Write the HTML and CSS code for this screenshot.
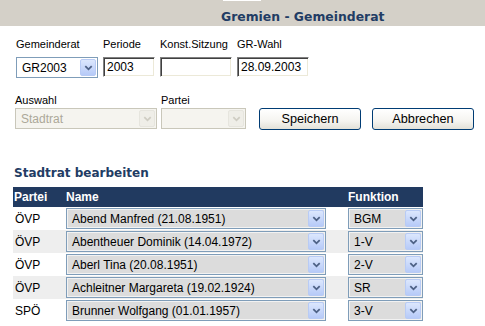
FILE: index.html
```html
<!DOCTYPE html>
<html>
<head>
<meta charset="utf-8">
<title>Gremien - Gemeinderat</title>
<link rel="stylesheet" href="styles.css">
</head>
<body>
<div class="topbar">
  <div class="notch"></div>
  <div class="title">Gremien - Gemeinderat</div>
</div>

<div class="row1">
  <label class="lbl">Gemeinderat</label>
  <label class="lbl">Periode</label>
  <label class="lbl">Konst.Sitzung</label>
  <label class="lbl">GR-Wahl</label>
  <div class="sel sel-white"><span class="sel-text">GR2003</span><span class="dd"><svg viewBox="0 0 9 6" width="9" height="6"><path d="M1.3 1.2 L4.5 4.3 L7.7 1.2" fill="none" stroke="#4d6185" stroke-width="1.8"/></svg></span></div>
  <div class="inp">2003</div>
  <div class="inp"></div>
  <div class="inp">28.09.2003</div>
</div>

<div class="row2">
  <label class="lbl">Auswahl</label>
  <label class="lbl">Partei</label>
  <span></span>
  <span></span>
  <div class="sel sel-disabled"><span class="sel-text">Stadtrat</span><span class="dd dd-dis"><svg viewBox="0 0 9 6" width="9" height="6"><path d="M1.3 1.2 L4.5 4.3 L7.7 1.2" fill="none" stroke="#cfcdc3" stroke-width="1.8"/></svg></span></div>
  <div class="sel sel-disabled"><span class="sel-text"></span><span class="dd dd-dis"><svg viewBox="0 0 9 6" width="9" height="6"><path d="M1.3 1.2 L4.5 4.3 L7.7 1.2" fill="none" stroke="#cfcdc3" stroke-width="1.8"/></svg></span></div>
  <button class="btn">Speichern</button>
  <button class="btn">Abbrechen</button>
</div>

<h2 class="section">Stadtrat bearbeiten</h2>

<table class="grid">
  <colgroup><col class="c-partei"><col class="c-name"><col class="c-funk"></colgroup>
  <thead>
    <tr><th>Partei</th><th>Name</th><th>Funktion</th></tr>
  </thead>
  <tbody>
    <tr>
      <td>ÖVP</td>
      <td><div class="sel sel-gray sel-name"><span class="sel-text">Abend Manfred (21.08.1951)</span><span class="dd"><svg viewBox="0 0 9 6" width="9" height="6"><path d="M1.3 1.2 L4.5 4.3 L7.7 1.2" fill="none" stroke="#4d6185" stroke-width="1.8"/></svg></span></div></td>
      <td><div class="sel sel-gray sel-funk"><span class="sel-text">BGM</span><span class="dd"><svg viewBox="0 0 9 6" width="9" height="6"><path d="M1.3 1.2 L4.5 4.3 L7.7 1.2" fill="none" stroke="#4d6185" stroke-width="1.8"/></svg></span></div></td>
    </tr>
    <tr class="alt">
      <td>ÖVP</td>
      <td><div class="sel sel-gray sel-name"><span class="sel-text">Abentheuer Dominik (14.04.1972)</span><span class="dd"><svg viewBox="0 0 9 6" width="9" height="6"><path d="M1.3 1.2 L4.5 4.3 L7.7 1.2" fill="none" stroke="#4d6185" stroke-width="1.8"/></svg></span></div></td>
      <td><div class="sel sel-gray sel-funk"><span class="sel-text">1-V</span><span class="dd"><svg viewBox="0 0 9 6" width="9" height="6"><path d="M1.3 1.2 L4.5 4.3 L7.7 1.2" fill="none" stroke="#4d6185" stroke-width="1.8"/></svg></span></div></td>
    </tr>
    <tr>
      <td>ÖVP</td>
      <td><div class="sel sel-gray sel-name"><span class="sel-text">Aberl Tina (20.08.1951)</span><span class="dd"><svg viewBox="0 0 9 6" width="9" height="6"><path d="M1.3 1.2 L4.5 4.3 L7.7 1.2" fill="none" stroke="#4d6185" stroke-width="1.8"/></svg></span></div></td>
      <td><div class="sel sel-gray sel-funk"><span class="sel-text">2-V</span><span class="dd"><svg viewBox="0 0 9 6" width="9" height="6"><path d="M1.3 1.2 L4.5 4.3 L7.7 1.2" fill="none" stroke="#4d6185" stroke-width="1.8"/></svg></span></div></td>
    </tr>
    <tr class="alt">
      <td>ÖVP</td>
      <td><div class="sel sel-gray sel-name"><span class="sel-text">Achleitner Margareta (19.02.1924)</span><span class="dd"><svg viewBox="0 0 9 6" width="9" height="6"><path d="M1.3 1.2 L4.5 4.3 L7.7 1.2" fill="none" stroke="#4d6185" stroke-width="1.8"/></svg></span></div></td>
      <td><div class="sel sel-gray sel-funk"><span class="sel-text">SR</span><span class="dd"><svg viewBox="0 0 9 6" width="9" height="6"><path d="M1.3 1.2 L4.5 4.3 L7.7 1.2" fill="none" stroke="#4d6185" stroke-width="1.8"/></svg></span></div></td>
    </tr>
    <tr>
      <td>SPÖ</td>
      <td><div class="sel sel-gray sel-name"><span class="sel-text">Brunner Wolfgang (01.01.1957)</span><span class="dd"><svg viewBox="0 0 9 6" width="9" height="6"><path d="M1.3 1.2 L4.5 4.3 L7.7 1.2" fill="none" stroke="#4d6185" stroke-width="1.8"/></svg></span></div></td>
      <td><div class="sel sel-gray sel-funk"><span class="sel-text">3-V</span><span class="dd"><svg viewBox="0 0 9 6" width="9" height="6"><path d="M1.3 1.2 L4.5 4.3 L7.7 1.2" fill="none" stroke="#4d6185" stroke-width="1.8"/></svg></span></div></td>
    </tr>
  </tbody>
</table>
</body>
</html>
```

FILE: styles.css
```css
html, body {
  margin: 0;
  padding: 0;
  background: #ffffff;
}
body {
  font-family: "Liberation Sans", Arial, sans-serif;
  font-size: 12px;
  color: #000;
}

.topbar {
  height: 26px;
  background: #d4d0c8;
}
.notch {
  width: 38px;
  height: 1px;
  margin-left: 223px;
  background: #ffffff;
}
.title {
  margin-top: 8px;
  padding-left: 221px;
  font-family: "DejaVu Sans", Verdana, sans-serif;
  font-weight: bold;
  font-size: 12.4px;
  line-height: 15px;
  color: #223c64;
}

.lbl {
  display: block;
  font-size: 11px;
  line-height: 13px;
  color: #000;
}

.row1 {
  display: grid;
  grid-template-columns: 82px 52px 72px 72px;
  column-gap: 5px;
  row-gap: 6px;
  align-items: start;
  padding: 12px 0 0 16px;
}
.row2 {
  display: grid;
  grid-template-columns: 142px 85px 111px 109px;
  column-gap: 4px;
  row-gap: 1px;
  align-items: start;
  padding: 16px 0 0 15px;
}

.sel {
  box-sizing: border-box;
  height: 21px;
  border: 1px solid #7f9db9;
  display: flex;
  align-items: center;
  padding: 1px;
  font-size: 12px;
}
.sel-text {
  flex: 1;
  padding-left: 4px;
  white-space: nowrap;
  overflow: hidden;
}
.sel-white { background: #fff; }
.sel-gray {
  background: #dcdcdc;
  box-shadow: inset 0 0 0 1px #f2f2f2;
}
.sel-disabled {
  background: #f5f4ef;
  border-color: #c9c7ba;
  color: #aca899;
}
.dd {
  box-sizing: border-box;
  width: 16px;
  height: 17px;
  border: 1px solid #b8cbf5;
  border-radius: 2px;
  background: linear-gradient(#dce7fd, #b6caf8);
  display: flex;
  align-items: center;
  justify-content: center;
}
.dd-dis {
  border-color: #e6e5de;
  background: #efeee8;
}

.inp {
  box-sizing: border-box;
  height: 20px;
  border: 1px solid;
  border-color: #808080 #ffffff #ffffff #808080;
  box-shadow: inset 1px 1px 0 #404040, inset -1px -1px 0 #ece9d8;
  padding: 0 3px;
  font-size: 12px;
  line-height: 18px;
  background: #fff;
}

.btn {
  justify-self: end;
  box-sizing: border-box;
  width: 102px;
  height: 22px;
  border: 1px solid #003c74;
  border-radius: 3px;
  background: linear-gradient(#ffffff 0%, #f5f4f0 60%, #e3e1d8 100%);
  font-family: "Liberation Sans", Arial, sans-serif;
  font-size: 12.7px;
  color: #000;
  padding: 0;
}

.section {
  margin: 36px 0 0 14px;
  font-family: "DejaVu Sans", Verdana, sans-serif;
  font-weight: bold;
  font-size: 12px;
  line-height: 15px;
  color: #223c64;
}

.grid {
  margin: 6px 0 0 13px;
  width: 410px;
  table-layout: fixed;
  border-collapse: collapse;
  border-spacing: 0;
}
.c-partei { width: 52px; }
.c-name { width: 282px; }
.c-funk { width: 76px; }
.grid th {
  background: #213a60;
  color: #fff;
  font-weight: bold;
  font-size: 12px;
  text-align: left;
  height: 20px;
  padding: 0 1px;
  vertical-align: middle;
}
.grid td {
  padding: 1px;
  height: 21px;
  vertical-align: middle;
}
.grid tr.alt td { background: #eeeeee; }
.sel-name { width: 260px; }
.sel-funk { width: 75px; }
.grid td:first-child { padding-left: 2px; }
```
